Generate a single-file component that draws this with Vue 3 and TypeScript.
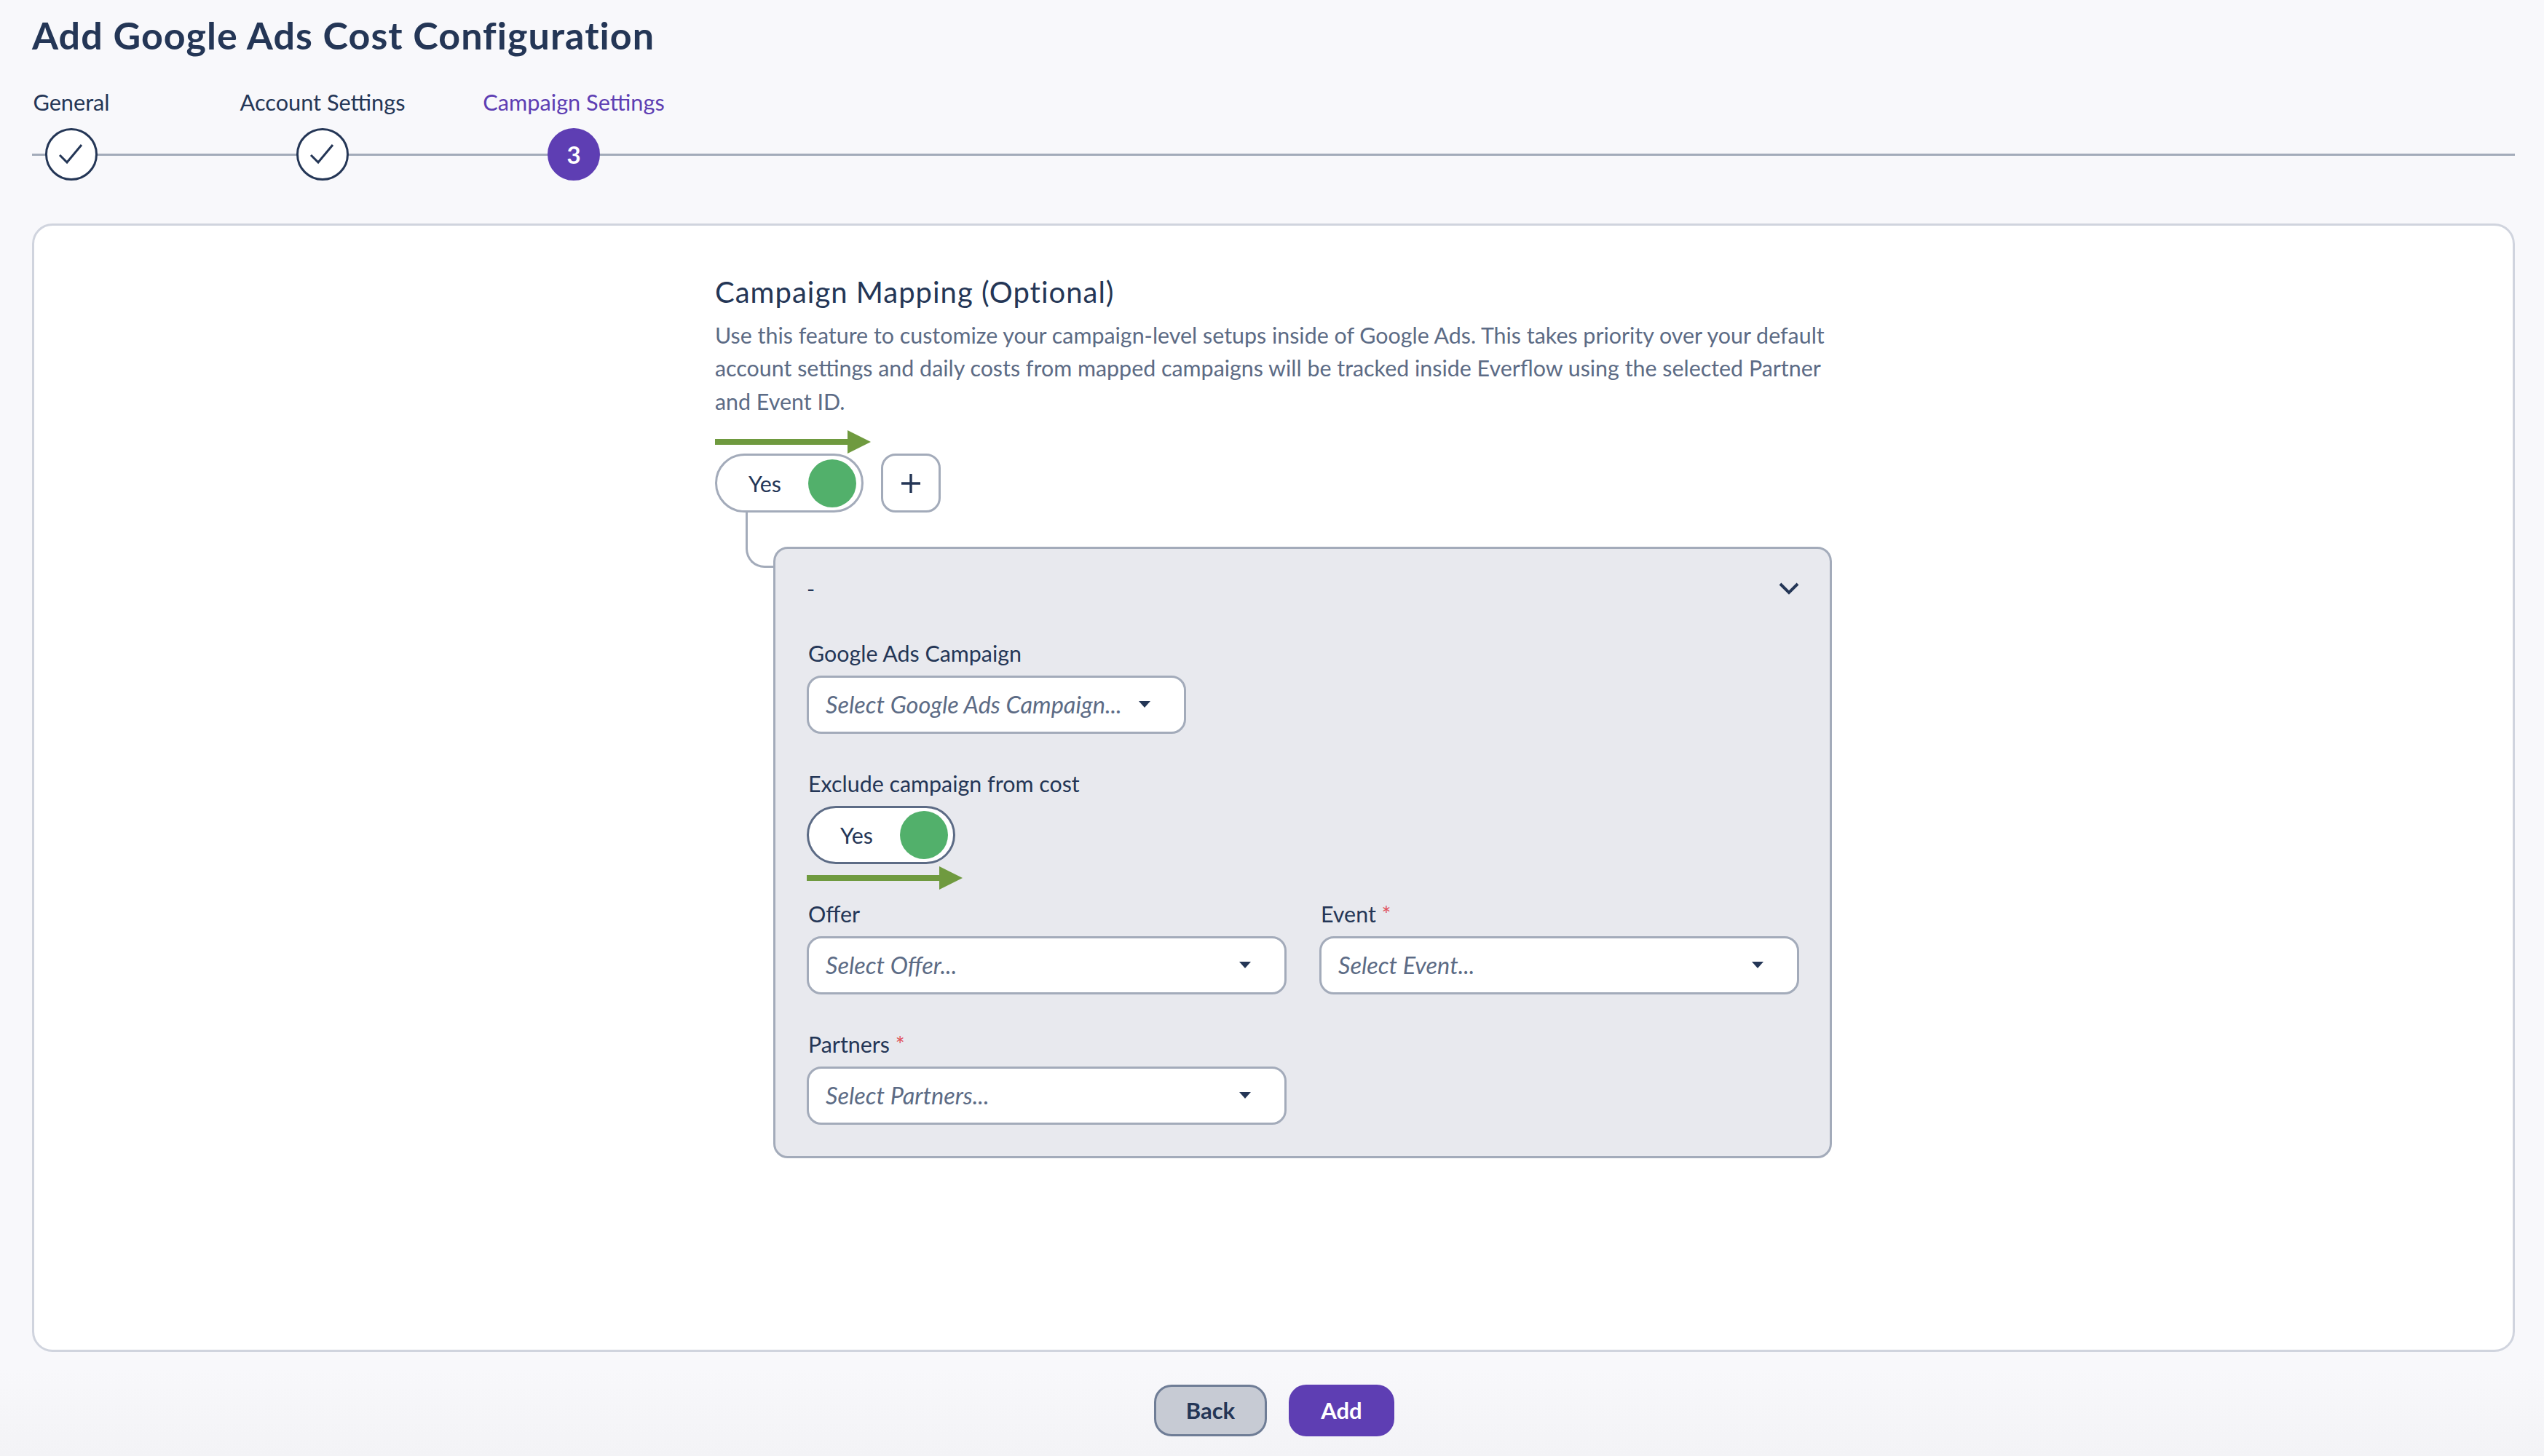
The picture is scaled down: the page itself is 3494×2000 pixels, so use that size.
<template>
  <div class="page">
    <h1 class="title">Add Google Ads Cost Configuration</h1>

    <div class="stepper">
      <div class="step-line"></div>
      <div v-for="step in steps" :key="step.label" class="step" :class="{ active: step.active }">
        <div class="step-label">{{ step.label }}</div>
        <div class="step-circle">
          <span v-if="step.active">{{ step.number }}</span>
          <svg v-else width="36" height="30" viewBox="0 0 36 30">
            <path d="M2 16 L12 26 L32 2" fill="none" stroke="#243656" stroke-width="3" />
          </svg>
        </div>
      </div>
    </div>

    <div class="card">
      <div class="content">
        <h2 class="heading">Campaign Mapping (Optional)</h2>
        <p class="desc">
          Use this feature to customize your campaign-level setups inside of Google Ads. This takes priority over your default
          account settings and daily costs from mapped campaigns will be tracked inside Everflow using the selected Partner
          and Event ID.
        </p>

        <div class="toggle-row">
          <svg class="arrow arrow-top" width="214" height="32" viewBox="0 0 214 32">
            <path d="M0 12 H182 V0 L214 16 L182 32 V20 H0 Z" fill="#6f9a3f" />
          </svg>
          <div class="toggle">
            <span>Yes</span>
            <i class="knob"></i>
          </div>
          <button class="plus">
            <svg width="26" height="26" viewBox="0 0 26 26">
              <path d="M13 0 V26 M0 13 H26" stroke="#243656" stroke-width="3.4" />
            </svg>
          </button>
        </div>

        <div class="panel">
          <div class="connector"></div>
          <div class="panel-head">
            <span>-</span>
            <svg width="30" height="18" viewBox="0 0 30 18">
              <path d="M3 3 L15 15 L27 3" fill="none" stroke="#243656" stroke-width="4" />
            </svg>
          </div>

          <div class="field first">
            <label>Google Ads Campaign</label>
            <div class="select short">
              <em>Select Google Ads Campaign...</em>
              <svg class="caret" width="18" height="10" viewBox="0 0 18 10"><path d="M1 1 H17 L9 10 Z" fill="#243656" /></svg>
            </div>
          </div>

          <div class="field toggle-field">
            <label>Exclude campaign from cost</label>
            <div class="toggle dark">
              <span>Yes</span>
              <i class="knob"></i>
            </div>
            <svg class="arrow arrow-bottom" width="214" height="32" viewBox="0 0 214 32">
              <path d="M0 12 H182 V0 L214 16 L182 32 V20 H0 Z" fill="#6f9a3f" />
            </svg>
          </div>

          <div class="grid">
            <div v-for="f in fields" :key="f.label" class="field">
              <label>{{ f.label }}<b v-if="f.required"> *</b></label>
              <div class="select">
                <em>{{ f.placeholder }}</em>
                <svg class="caret" width="18" height="10" viewBox="0 0 18 10"><path d="M1 1 H17 L9 10 Z" fill="#243656" /></svg>
              </div>
            </div>
          </div>
        </div>
      </div>
    </div>

    <div class="actions">
      <button class="btn back">Back</button>
      <button class="btn add">Add</button>
    </div>
  </div>
</template>

<script setup lang="ts">
const steps = [
  { label: 'General', number: 1, active: false },
  { label: 'Account Settings', number: 2, active: false },
  { label: 'Campaign Settings', number: 3, active: true },
]

const fields = [
  { label: 'Offer', placeholder: 'Select Offer...', required: false },
  { label: 'Event', placeholder: 'Select Event...', required: true },
  { label: 'Partners', placeholder: 'Select Partners...', required: true },
]
</script>

<style>
html,
body {
  margin: 0;
  background: #f8f8fb;
}
</style>

<style scoped>
.page {
  box-sizing: border-box;
  width: 3494px;
  height: 2000px;
  padding: 18px 40px 0 44px;
  overflow: hidden;
  font-family: Lato, "Liberation Sans", sans-serif;
  color: #243656;
  background: linear-gradient(#f8f8fb 94%, #f3f3f6);
}

.title {
  margin: 0;
  font-size: 52px;
  line-height: 60px;
  font-weight: 700;
  letter-spacing: 1.05px;
}

.stepper {
  position: relative;
  display: flex;
  gap: 237px;
  margin-top: 44px;
  height: 128px;
}

.step-line {
  position: absolute;
  left: 0;
  right: 0;
  top: 89px;
  height: 3px;
  background: #a3abba;
}

.step {
  position: relative;
  display: flex;
  flex-direction: column;
  align-items: center;
  width: 108px;
  font-size: 30.7px;
  line-height: 36px;
  white-space: nowrap;
}

.step.active {
  color: #5e3eb3;
}

.step-label {
  padding-top: 1px;
  height: 35px;
}

.step-circle {
  box-sizing: border-box;
  display: flex;
  align-items: center;
  justify-content: center;
  width: 72px;
  height: 72px;
  margin-top: 18px;
  border: 3px solid #243656;
  border-radius: 50%;
  background: #fff;
}

.active .step-circle {
  border-color: #5e3eb3;
  background: #5e3eb3;
  color: #fff;
  font-weight: 700;
  font-size: 33px;
}

.card {
  box-sizing: border-box;
  height: 1550px;
  margin-top: 57px;
  padding-top: 66px;
  border: 3px solid #d0d4de;
  border-radius: 28px;
  background: #fff;
}

.content {
  width: 1534px;
  margin: 0 auto;
}

.heading {
  margin: 0;
  font-size: 40px;
  line-height: 50px;
  font-weight: 400;
  letter-spacing: 1px;
}

.desc {
  margin: 11.5px 0 0;
  width: 1534px;
  font-size: 30.4px;
  line-height: 45.5px;
  color: #5c6b85;
}

.toggle-row {
  position: relative;
  display: flex;
  gap: 24px;
  margin-top: 49px;
}

.arrow {
  position: absolute;
  left: 0;
}

.arrow-top {
  top: -32px;
}

.toggle {
  box-sizing: border-box;
  display: flex;
  align-items: center;
  justify-content: space-between;
  width: 204px;
  height: 81px;
  padding: 0 7px 0 43px;
  border: 3px solid #a3abba;
  border-radius: 41px;
  background: #fff;
  font-size: 30.4px;
}

.toggle.dark {
  height: 80px;
  border-color: #5c6b85;
  margin-left: -2px;
}

.knob {
  width: 66px;
  height: 66px;
  border-radius: 50%;
  background: #52b06b;
}

.plus {
  box-sizing: border-box;
  display: flex;
  align-items: center;
  justify-content: center;
  width: 82px;
  height: 81px;
  padding: 0;
  border: 3px solid #a3abba;
  border-radius: 20px;
  background: #fff;
}

.panel {
  position: relative;
  box-sizing: border-box;
  height: 840px;
  margin: 47px 0 0 80px;
  padding: 0 45px;
  border: 3px solid #a3abba;
  border-radius: 20px;
  background: #e8e9ee;
}

.connector {
  position: absolute;
  left: -41px;
  top: -50px;
  width: 38px;
  height: 76px;
  box-sizing: border-box;
  border-left: 3px solid #a3abba;
  border-bottom: 3px solid #a3abba;
  border-bottom-left-radius: 26px;
}

.panel-head {
  display: flex;
  align-items: center;
  justify-content: space-between;
  height: 108px;
  margin-right: -4px;
  margin-left: -2px;
  font-size: 30px;
}

.field label {
  display: block;
  font-size: 30.4px;
  line-height: 32px;
  margin-bottom: 15px;
}

.field label b {
  font-weight: 400;
  color: #e0525c;
}

.first {
  margin-top: 19px;
}

.toggle-field {
  position: relative;
  margin-top: 52px;
}

.arrow-bottom {
  left: -2px;
  top: 130px;
}

.select {
  position: relative;
  box-sizing: border-box;
  display: flex;
  align-items: center;
  justify-content: space-between;
  height: 80px;
  margin-left: -2px;
  padding: 0 45px 2px 23px;
  border: 3px solid #a3abba;
  border-radius: 20px;
  background: #fff;
  font-size: 32.5px;
  color: #5c6b85;
}

.select.short {
  width: 521px;
}

.caret {
  flex: none;
}

.grid {
  display: grid;
  grid-template-columns: 657px 657px;
  column-gap: 47px;
  row-gap: 52px;
  margin-top: 52px;
}

.actions {
  display: flex;
  justify-content: center;
  gap: 30px;
  margin-top: 45px;
  margin-left: 2px;
}

.btn {
  box-sizing: border-box;
  height: 71px;
  padding-bottom: 3px;
  border-radius: 24px;
  font-family: inherit;
  font-size: 31px;
  font-weight: 700;
}

.back {
  width: 155px;
  border: 3px solid #6f7d96;
  background: #c7cbd4;
  color: #243656;
}

.add {
  width: 145px;
  border: none;
  background: #5e3eb3;
  color: #fff;
}
</style>
